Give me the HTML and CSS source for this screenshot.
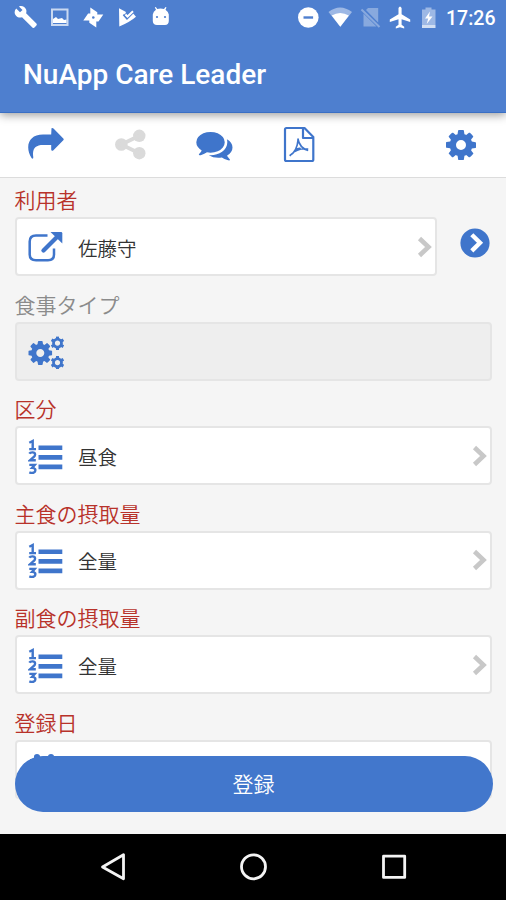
FILE: index.html
```
<!DOCTYPE html>
<html lang="ja">
<head>
<meta charset="utf-8">
<title>NuApp Care Leader</title>
<link rel="stylesheet" href="styles.css">
</head>
<body>
<svg class="defs" aria-hidden="true">
  <symbol id="cog" viewBox="128 128 1536 1536"><path d="M1152 896q0-106-75-181t-181-75-181 75-75 181 75 181 181 75 181-75 75-181zm512-109v222q0 12-8 23t-20 13l-185 28q-19 54-39 91 35 50 107 138 10 12 10 25t-9 23q-27 37-99 108t-94 71q-12 0-26-9l-138-108q-44 23-91 38-16 136-29 186-7 28-36 28h-222q-14 0-24.500-8.500t-11.500-21.500l-28-184q-49-16-90-37l-141 107q-10 9-25 9-14 0-25-11-126-114-165-168-7-10-7-23 0-12 8-23 15-21 51-66.500t54-70.500q-27-50-41-99l-183-27q-13-2-21-12.500t-8-23.500v-222q0-12 8-23t19-13l186-28q14-46 39-92-40-57-107-138-10-12-10-24 0-10 9-23 26-36 98.500-107.500t94.500-71.500q13 0 26 10l138 107q44-23 91-38 16-136 29-186 7-28 36-28h222q14 0 24.500 8.500t11.500 21.500l28 184q49 16 90 37l142-107q9-9 24-9 13 0 25 10 129 119 165 170 7 8 7 22 0 12-8 23-15 21-51 66.500t-54 70.500q26 50 41 98l183 28q13 2 21 12.500t8 23.500z"/></symbol>
  <symbol id="minicog" viewBox="-7 -7 14 14"><circle r="4" fill="none" stroke="currentColor" stroke-width="2.800"/><path d="M0-6.800V-4.500M0 4.500V6.800M-5.900-3.400-4-2.300M4 2.300 5.900 3.400M-5.900 3.400-4 2.300M4-2.300 5.900-3.400" stroke="currentColor" stroke-width="3"/></symbol>
  <symbol id="list" viewBox="0 -1.700 36 36"><path d="M10.500 5.700H34.300v4.700H10.500zM10.500 15.300H34.300v4.700H10.500zM10.500 24.800H34.300v4.700H10.500z"/><g fill="none" stroke="currentColor" stroke-width="2.400"><path d="M1.300 3 4.700 1.300V9.300M1.200 9.400H8"/><path d="M1.300 14Q2.200 12.600 4.500 12.700C8 12.900 7.500 15.900 5.500 17.500L2.200 20.500H7.800"/><path d="M1.300 25.200H6.700L4.100 28.200C7.500 28.200 7.800 30.200 6.900 32.100Q5 34.200 1.300 32.600"/></g></symbol>
  <symbol id="chev" viewBox="0 0 16 22"><path d="M2.500 2.500 11.500 11 2.500 19.500" fill="none" stroke="currentColor" stroke-width="4.600"/></symbol>
</svg>
<div class="screen">
  <header class="header">
    <div class="status">
      <div class="group">
        <svg width="24" height="24" viewBox="14 5 24 24"><path d="M16.200 8.500 20 12.300 22.500 9.900 19 6.400C22 5.400 25.200 6.800 26.200 9.800Q26.700 11.500 26.100 13.300L36.400 23.500Q37.300 24.600 36.200 25.700L34.500 27.600Q33.500 28.500 32.400 27.500L22 17.300C19.500 18.100 16.700 17.100 15.300 14.700Q13.600 11.500 16.200 8.500z"/></svg>
        <svg width="24" height="24" viewBox="48 5 24 24"><path fill="none" stroke="currentColor" stroke-width="2" opacity=".7" d="M52 9.500H67.500V25H52z"/><path d="M53 23V19L56 17 58 19 62 18 64 20 66.500 19.500V23z"/></svg>
        <svg width="24" height="24" viewBox="82 5 24 24"><path d="M93.300 17.500 90.300 13.200V7.500L97.300 12.300V15zM93.300 17.500 97.600 14.500H103.300L98.500 21.500H95.800zM93.300 17.500 96.300 21.800V27.500L89.300 22.700V20zM93.300 17.500 89 20.500H83.300L88.100 13.500H90.800z"/><circle cx="93.300" cy="17.500" r="1.300" fill="#4e7fcf"/></svg>
        <svg width="24" height="24" viewBox="116 5 24 24"><path d="M119 8.200 126 12 125 14.500 127.500 16.500 133 13.200 136 16.800Q130 22 119.300 26.600z"/><path d="M123.500 14.500 127 18.500 134.500 11" fill="none" stroke="#4e7fcf" stroke-width="2"/><path d="M125.500 14.500 127.500 16.500 133 11.300" fill="none" stroke="currentColor" stroke-width="2"/></svg>
        <svg width="24" height="24" viewBox="150 5 24 24"><path d="M152.800 14.500Q153.300 11.400 156 9.800L154.800 7.500 155.800 7 157.300 9Q160.500 8 164 9L165.500 7 166.500 7.500 165.500 9.800Q168.500 12 168.800 14.500V21Q168.600 24.900 165 25.100H157Q153 24.900 152.800 21z"/><circle cx="157" cy="17" r="1.100" fill="#4e7fcf"/><circle cx="165" cy="17" r="1.100" fill="#4e7fcf"/></svg>
      </div>
      <div class="group">
        <svg width="32" height="24" viewBox="296 5 32 24"><circle cx="308.300" cy="17.500" r="10.300"/><path d="M303.500 16.300h9.600v2.400h-9.600z" fill="#4e7fcf"/></svg>
        <svg width="31" height="24" viewBox="328 5 31 24"><path opacity=".45" d="M328.500 12Q340 3 352 12L340.300 26.700z"/><path d="M331.700 15.500Q340 10.300 348.900 15.500L340.300 26.700z"/></svg>
        <svg width="29" height="24" viewBox="359 5 29 24"><g opacity=".33"><path d="M368 8H378.200V22.500L366 10zM363.500 13.500 376.500 26.500H363.500z"/><path d="M361.500 9.500 379.500 27" stroke="currentColor" stroke-width="2"/></g></svg>
        <svg width="29" height="24" viewBox="388 5 29 24"><path d="M398.500 8Q400 5 401.600 8V14.300L410.200 19.500V22L401.600 19.200V24.800L404.200 26.800V28.400L400 27.200 395.800 28.400V26.800L398.500 24.800V19.200L389.800 22V19.500L398.500 14.300z"/></svg>
        <svg width="29" height="24" viewBox="417 5 29 24"><path opacity=".45" d="M422 9.500H425.500V7.500H431.500V9.500H435.500V25H422z"/><path d="M430 11.500 425 18.500H428.200L426.700 24 432.500 16.500H429z"/><path opacity=".75" d="M422 25h13.500v3H422z"/></svg>
        <span class="time">17:26</span>
      </div>
    </div>
    <h1 class="title">NuApp Care Leader</h1>
  </header>
  <nav class="toolbar">
    <div class="tools">
      <svg width="40" height="40" viewBox="26 125 40 40"><path d="M51.500 128.300Q52.500 127.600 53.500 128.600L63.300 138.400Q64.200 139.300 63.300 140.300L53.200 150.400Q51.500 151.600 51.200 149.500V145H43C35.500 145 31.900 148.500 33.300 157.300Q33.300 159.400 31.700 158.200C24.500 146.500 28.500 134.500 43 134.500H51.200z"/></svg>
      <svg class="off" width="40" height="40" viewBox="111 125 40 40"><circle cx="121.300" cy="144.500" r="6.300"/><circle cx="139.300" cy="135.800" r="6.200"/><circle cx="139.300" cy="153.200" r="6.200"/><path d="M139.300 135.800 121.300 144.500 139.300 153.200" fill="none" stroke="currentColor" stroke-width="3.800"/></svg>
      <svg width="40" height="40" viewBox="195 125 40 40"><path transform="translate(196.300 126.800) scale(.0202)" d="M1408 768q0 139-94 257t-256.500 186.500-353.500 68.500q-86 0-176-16-124 88-278 128-36 9-86 16h-3q-11 0-20.500-8t-11.500-21q-1-3-1-6.500t.5-6.500 2-6l2.500-5 3.500-5.500 4-5 4.500-5 4-4.500q5-6 23-25t26-29.500 22.500-29 25-38.500 20.500-44q-124-72-195-177t-71-224q0-139 94-257t256.500-186.500 353.500-68.500 353.500 68.500 256.500 186.500 94 257zm384 256q0 120-71 224.500t-195 176.500q10 24 20.500 44t25 38.500 22.500 29 26 29.500 23 25q1 1 4 4.500t4.500 5 4 5 3.500 5.500l2.500 5 2 6 .5 6.500-1 6.500q-3 14-13 22t-22 7q-50-7-86-16-154-40-278-128-90 16-176 16-271 0-472-132 58 4 88 4 161 0 309-45t264-129q125-92 192-212t67-257q0-77-23-152 129 71 204 178t75 230z"/></svg>
      <svg width="40" height="40" viewBox="280 125 40 40"><g fill="none" stroke="currentColor" stroke-width="2.200" stroke-linejoin="round"><path d="M286.500 128H304.500L313.300 137V159.500Q313.300 161 311.800 161H286.500Q285 161 285 159.500V129.500Q285 128 286.500 128zM303 128.500V138H313"/><path stroke-width="1.700" d="M297.800 138.500Q299.500 148 308.200 150.500M308.200 149Q298 147.500 291 154.500L289.800 156M289.700 155.500Q297 152 298.200 139M295.500 150Q298 148 300.500 148.500"/></g></svg>
    </div>
    <svg class="settings" width="30" height="30"><use href="#cog"/></svg>
  </nav>
  <main class="form">
    <section class="field">
      <label class="label">利用者</label>
      <div class="row">
        <div class="box">
          <svg class="icon" width="36" height="36" viewBox="28 229 36 36"><path d="M47.500 235.500H36Q29.700 235.500 29.700 241.500V254.500Q29.700 260.200 36 260.200H48Q54 260.200 54 254.500V248.500" fill="none" stroke="currentColor" stroke-width="2.500"/><path d="M43.500 250.500 58 236" stroke="currentColor" stroke-width="4.300" stroke-linecap="round"/><path d="M50.500 232H61Q62.300 232 62.300 233.300V243.500z"/></svg>
          <span class="value">佐藤守</span><svg class="chev" width="16" height="22"><use href="#chev"/></svg>
        </div>
        <svg class="next" width="30" height="30" viewBox="0 0 30 30"><circle cx="15" cy="15" r="14.600"/><path d="M11.800 6.700 20 14.800 11.800 22.900" fill="none" stroke="#fff" stroke-width="4.400"/></svg>
      </div>
    </section>
    <section class="field">
      <label class="label muted">食事タイプ</label>
      <div class="box disabled">
        <svg class="icon wide" width="40" height="36" viewBox="28 333 40 36"><use href="#cog" x="28.300" y="341" width="24" height="24"/><use href="#minicog" x="50.500" y="336.200" width="14" height="14"/><use href="#minicog" x="50.500" y="355.700" width="14" height="14"/></svg>
      </div>
    </section>
    <section class="field">
      <label class="label">区分</label>
      <div class="box"><svg class="icon" width="36" height="36"><use href="#list"/></svg><span class="value">昼食</span><svg class="chev" width="16" height="22"><use href="#chev"/></svg></div>
    </section>
    <section class="field">
      <label class="label">主食の摂取量</label>
      <div class="box"><svg class="icon" width="36" height="36"><use href="#list"/></svg><span class="value">全量</span><svg class="chev" width="16" height="22"><use href="#chev"/></svg></div>
    </section>
    <section class="field">
      <label class="label">副食の摂取量</label>
      <div class="box"><svg class="icon" width="36" height="36"><use href="#list"/></svg><span class="value">全量</span><svg class="chev" width="16" height="22"><use href="#chev"/></svg></div>
    </section>
    <section class="field">
      <label class="label">登録日</label>
      <div class="box"><svg class="icon" width="36" height="36" viewBox="0 0 36 36"><path d="M2 8H6V5.500Q6 3 9 3T12 5.500V8H20V5.500Q20 3 23 3T26 5.500V8H30V33H2z"/></svg></div>
    </section>
  </main>
  <button class="submit">登録</button>
</div>
<footer class="navbar">
  <svg width="30" height="30" viewBox="98 852 30 30"><path d="M102.500 867 123.500 854.800V878.800z"/></svg>
  <svg width="30" height="30" viewBox="239 852 30 30"><circle cx="253.500" cy="866.800" r="12"/></svg>
  <svg width="30" height="30" viewBox="379 852 30 30"><path d="M383.500 856.200H404.700V877.400H383.500z"/></svg>
</footer>
</body>
</html>
```
FILE: styles.css
```
* { box-sizing: border-box; }
body {
  margin: 0;
  width: 506px;
  height: 900px;
  display: flex;
  flex-direction: column;
  overflow: hidden;
  background: #000;
  font-family: Roboto, "Noto Sans CJK JP", sans-serif;
}
svg { display: block; flex: none; fill: currentColor; }
.defs { position: absolute; width: 0; height: 0; }
.screen {
  position: relative;
  height: 833.5px;
  flex: none;
  overflow: hidden;
  background: #f5f5f5;
  color: #3f75cb;
}
.header {
  position: relative;
  z-index: 1;
  height: 113px;
  color: #fff;
  background: #4e7fcf;
  border-bottom: 1px solid #3a6fc4;
  box-shadow: 0 2px 9px rgba(0, 0, 0, .4);
}
.status {
  height: 36px;
  padding: 5px 0 0 14px;
  display: flex;
  justify-content: space-between;
}
.group { display: flex; }
.group:first-child { gap: 10px; }
.time { width: 60px; font-size: 19.5px; font-weight: 500; line-height: 27px; }
.title {
  margin: 0;
  padding-left: 23px;
  font-size: 28px;
  font-weight: 500;
  line-height: 78px;
}
.toolbar {
  height: 65px;
  padding: 0 30px 0 26px;
  display: flex;
  align-items: center;
  justify-content: space-between;
  background: #fff;
  border-bottom: 1.5px solid #dcdcdc;
}
.tools { display: flex; gap: 44.5px; }
.off { color: #dadada; }
.form { padding: 9px 14px 0 14.5px; }
.field { margin-bottom: 15.6px; }
.label {
  display: block;
  height: 30px;
  font-size: 21px;
  font-weight: 350;
  line-height: 29px;
  color: #b8322a;
}
.muted { color: #8b8b8b; }
.row { display: flex; }
.row .box { width: 422px; }
.next { margin: 11px 0 0 23px; }
.box {
  height: 59px;
  padding: 0 2px 0 11px;
  display: flex;
  align-items: center;
  background: #fff;
  border: 2px solid #e5e5e5;
  border-radius: 4px;
}
.disabled { background: #eee; }
.value {
  margin-left: 14.5px;
  padding-top: 6px;
  flex: 1;
  font-size: 19.5px;
  font-weight: 350;
  line-height: 28px;
  color: #333;
}
.chev { color: #c8c8c8; }
.submit {
  position: absolute;
  left: 14.5px;
  top: 756px;
  width: 478px;
  height: 55.5px;
  padding: 0;
  border: 0;
  border-radius: 28px;
  background: #4277cc;
  color: #fff;
  font: 350 21px/55px "Noto Sans CJK JP", sans-serif;
}
.navbar {
  flex: 1;
  padding: 0 97px 0 98px;
  display: flex;
  align-items: center;
  justify-content: space-between;
  background: #000;
  color: #f4f4f4;
}
.navbar svg { fill: none; stroke: currentColor; stroke-width: 2.8; stroke-linejoin: round; }
```
